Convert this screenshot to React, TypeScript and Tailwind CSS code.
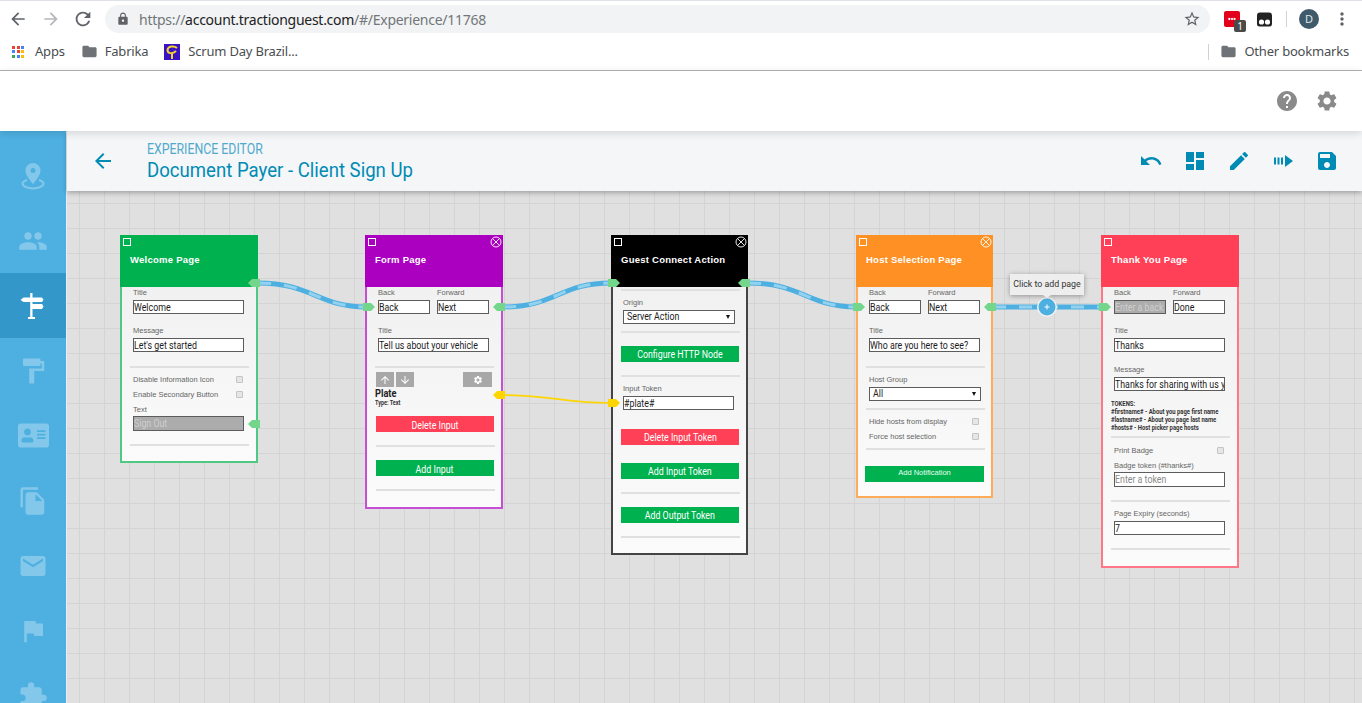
import React from "react";
import {
  MdArrowBack,
  MdArrowForward,
  MdRefresh,
  MdLock,
  MdStarBorder,
  MdFolder,
  MdMoreVert,
  MdHelp,
  MdSettings,
  MdUndo,
  MdDashboard,
  MdEdit,
  MdSave,
  MdPeople,
  MdFormatPaint,
  MdFileCopy,
  MdEmail,
  MdFlag,
  MdExtension,
  MdArrowUpward,
  MdArrowDownward,
} from "react-icons/md";
import { FaAddressCard } from "react-icons/fa";

const Narrow = ({ children, className = "" }: { children: React.ReactNode; className?: string }) => (
  <span className={`inline-block whitespace-nowrap scale-x-[0.84] ${className}`}>{children}</span>
);

const Label = ({ children, className = "" }: { children: React.ReactNode; className?: string }) => (
  <div className={`h-[10px] text-[7.5px] leading-[12px] text-[#666] font-['Liberation_Sans',sans-serif] whitespace-nowrap ${className}`}>
    {children}
  </div>
);

const Input = ({
  value,
  className = "",
  muted,
  disabled,
}: {
  value: string;
  className?: string;
  muted?: boolean;
  disabled?: boolean;
}) => (
  <div
    className={`h-[14px] border border-[#5c5c5c] overflow-hidden flex items-center pt-px text-[10.5px] font-['Roboto',sans-serif] ${
      disabled ? "bg-[#acacac] text-[#cfcfcf]" : "bg-white text-[#1c1c1c]"
    } ${muted ? "text-[#8a8a8a]" : ""} ${className}`}
  >
    <Narrow className="origin-left">{value}</Narrow>
  </div>
);

const SelectBox = ({ value, className = "" }: { value: string; className?: string }) => (
  <div className={`h-[14px] border border-[#5c5c5c] bg-white flex items-center justify-between pl-[3px] pr-[4px] text-[10.5px] text-[#1c1c1c] font-['Roboto',sans-serif] ${className}`}>
    <Narrow className="origin-left">{value}</Narrow>
    <span className="w-0 h-0 border-x-[2.5px] border-x-transparent border-t-[4px] border-t-[#111]" />
  </div>
);

const Hr = ({ className = "" }: { className?: string }) => (
  <div className={`h-[2px] w-[119px] ml-[8px] bg-[#e0e0e0] ${className}`} />
);

const Btn = ({ label, color, className = "" }: { label: string; color: string; className?: string }) => (
  <div className={`h-[16px] w-[118px] ml-[8px] flex items-center justify-center text-white text-[10.5px] font-['Roboto',sans-serif] ${color} ${className}`}>
    <Narrow>{label}</Narrow>
  </div>
);

const CheckRow = ({ label, className = "" }: { label: string; className?: string }) => (
  <div className={`h-[10px] ml-[11px] w-[111px] flex items-center justify-between ${className}`}>
    <Label>{label}</Label>
    <span className="w-[7px] h-[7px] mr-px rounded-[1px] bg-[#e6e6e6] border border-[#c4c4c4]" />
  </div>
);

const BackForward = ({ back, forward, backDisabled }: { back: string; forward: string; backDisabled?: boolean }) => (
  <div className="flex ml-[11px] gap-[7px]">
    <div className="w-[52px]">
      <Label>Back</Label>
      <Input value={back} disabled={backDisabled} className="mt-[3px]" />
    </div>
    <div className="w-[52px]">
      <Label>Forward</Label>
      <Input value={forward} className="mt-[3px]" />
    </div>
  </div>
);

const CloseIcon = () => (
  <svg width="12" height="12" viewBox="0 0 12 12" className="absolute right-[1px] top-[1px]" fill="none" stroke="#fff" strokeWidth="0.9">
    <circle cx="6" cy="6" r="5" />
    <path d="M2.6 2.6 L9.4 9.4 M9.4 2.6 L2.6 9.4" />
  </svg>
);

const Card = ({
  title,
  pos,
  head,
  edge,
  closable,
  children,
}: {
  title: string;
  pos: string;
  head: string;
  edge: string;
  closable?: boolean;
  children: React.ReactNode;
}) => (
  <div className={`absolute flex flex-col ${pos}`}>
    <div className={`relative h-[52px] shrink-0 ${head}`}>
      <span className="absolute left-[3px] top-[3px] w-[8px] h-[8px] border border-white" />
      {closable && <CloseIcon />}
      <div className="absolute left-[10px] top-[19px] text-[9.5px] leading-[12px] font-bold text-white font-['Liberation_Sans',sans-serif] whitespace-nowrap tracking-[0.25px]">
        {title}
      </div>
    </div>
    <div className={`flex-1 border-x-2 border-b-2 bg-gradient-to-b from-[#f1f1f1] to-[#fbfbfb] ${edge}`}>{children}</div>
  </div>
);

const PinIcon = () => (
  <svg width="24" height="28" viewBox="0 0 24 28" fill="currentColor" className="-ml-px">
    <path
      fillRule="evenodd"
      d="M12 1a7.5 7.5 0 0 1 7.5 7.5C19.5 14 12 22 12 22S4.5 14 4.5 8.5A7.5 7.5 0 0 1 12 1zm0 5a2.5 2.5 0 1 0 0 5 2.5 2.5 0 0 0 0-5z"
    />
    <path
      d="M6 18C3 19 1.5 20 1.5 21.5 1.5 24 6 26.5 12 26.5S22.5 24 22.5 21.5C22.5 20 21 19 18 18"
      fill="none"
      stroke="currentColor"
      strokeWidth="2"
    />
  </svg>
);

const SignIcon = () => (
  <svg width="24" height="26" viewBox="0 0 24 26" fill="currentColor" className="-ml-[3px]">
    <path d="M10.2 0h2.3v24.5h-2.3z" />
    <path d="M0.5 7 3.5 4.5H22l1.5 2.3L22 9H3.5z" />
    <path d="M11 11h11l1.5 2.5L22 16H11z" />
    <path d="M8 24h7v2H8z" />
  </svg>
);

const navIcons = [PinIcon, MdPeople, SignIcon, MdFormatPaint, FaAddressCard, MdFileCopy, MdEmail, MdFlag, MdExtension];

const connectors: [number, number, "l" | "r", string][] = [
  [254, 283, "l", "#74d68a"],
  [254, 424, "l", "#74d68a"],
  [369, 307, "r", "#74d68a"],
  [499, 307, "l", "#74d68a"],
  [614, 283, "r", "#74d68a"],
  [744, 283, "l", "#74d68a"],
  [859, 307, "r", "#74d68a"],
  [990, 307, "l", "#74d68a"],
  [1105, 307, "r", "#74d68a"],
  [499, 395, "l", "#ffd500"],
  [614, 403, "r", "#ffd500"],
];

const curves = [
  "M258 283 C 312 283, 318 307, 366 307",
  "M503 307 C 556 307, 560 283, 611 283",
  "M748 283 C 802 283, 808 307, 856 307",
  "M993 307 L 1101 307",
];

const Edges = () => (
  <svg width="1295" height="512" viewBox="67 191 1295 512" className="absolute inset-0 z-10 pointer-events-none" fill="none">
    {curves.map((d) => (
      <g key={d}>
        <path d={d} stroke="#4eb0e1" strokeWidth="5" />
        <path d={d} stroke="#93d2ef" strokeWidth="3" strokeDasharray="13 13" />
      </g>
    ))}
    <path d="M499 395 C 550 395, 565 403, 611 403" stroke="#ffd500" strokeWidth="1.6" />
    {connectors.map(([x, y, dir, color]) => (
      <polygon
        key={`${x}-${y}`}
        fill={color}
        points={
          dir === "l"
            ? `${x - 6},${y} ${x - 2},${y - 4} ${x + 6},${y - 4} ${x + 6},${y + 4} ${x - 2},${y + 4}`
            : `${x - 6},${y - 4} ${x + 2},${y - 4} ${x + 6},${y} ${x + 2},${y + 4} ${x - 6},${y + 4}`
        }
      />
    ))}
    <circle cx="1047" cy="307" r="10" fill="#f2f2f2" />
    <circle cx="1047" cy="307" r="8.5" fill="#4eb0e1" />
    <path d="M1044.5 307 H1049.5 M1047 304.5 V309.5" stroke="#fff" strokeWidth="1" />
  </svg>
);

const BrowserBar = () => (
  <div className="h-[71px] shrink-0 bg-white border-b border-[#b3b3b3] border-t border-t-[#dfe1e8] font-['Noto_Sans',sans-serif] text-[#5f6368]">
    <div className="h-[33px] flex items-center pt-[3px]">
      <MdArrowBack size={20} className="ml-[8px] text-[#5f6368]" />
      <MdArrowForward size={20} className="ml-[13px] text-[#b4b6b9]" />
      <MdRefresh size={22} className="ml-[11px] text-[#5f6368]" />
      <div className="ml-[11px] w-[1105px] h-[28px] rounded-full bg-[#f1f3f4] flex items-center">
        <MdLock size={14} className="ml-[11px] text-[#5f6368]" />
        <span className="ml-[9px] text-[14px] tracking-[-0.27px] text-[#72767a] whitespace-nowrap">
          https://<span className="text-[#222]">account.tractionguest.com</span>/#/Experience/11768
        </span>
        <MdStarBorder size={18} className="ml-auto mr-[9px] text-[#5f6368]" />
      </div>
      <div className="relative ml-[14px] w-[16px] h-[16px] rounded-[2px] bg-[#e2001a] flex items-center justify-center text-[7px] leading-none font-bold text-white">
        •••
        <span className="absolute left-[10px] top-[9px] w-[12px] h-[12px] rounded-[2px] bg-[#4a4a4a] text-[10px] leading-[12px] text-center font-normal">1</span>
      </div>
      <svg width="15" height="15" viewBox="0 0 15 15" className="ml-[17px]">
        <path d="M3 0.5h9a3 3 0 0 1 3 3V12a2.5 2.5 0 0 1-2.5 2.5h-10A2.5 2.5 0 0 1 0 12V3.5a3 3 0 0 1 3-3z" fill="#222" />
        <circle cx="4.5" cy="10" r="2.6" fill="#fff" />
        <circle cx="10.5" cy="10" r="2.6" fill="#fff" />
      </svg>
      <div className="ml-[14px] w-px h-[16px] bg-[#d0d2d4]" />
      <div className="ml-[12px] w-[20px] h-[20px] rounded-full bg-[#3f5a6b] text-[#dfe6ea] text-[11px] leading-[20px] text-center">D</div>
      <MdMoreVert size={20} className="ml-[13px] text-[#5f6368]" />
    </div>
    <div className="h-[35px] flex items-center text-[13px] text-[#4a4d50] tracking-[-0.2px]">
      <span className="ml-[12px] grid grid-cols-3 gap-[1.5px]">
        {["#ea4335", "#ea4335", "#4285f4", "#4285f4", "#ea4335", "#fbbc05", "#34a853", "#4285f4", "#fbbc05"].map((c, i) => (
          <i key={i} className="block w-[3px] h-[3px]" style={{ background: c }} />
        ))}
      </span>
      <span className="ml-[11px]">Apps</span>
      <MdFolder size={17} className="ml-[16px] text-[#6f7377]" />
      <span className="ml-[7px]">Fabrika</span>
      <svg width="16" height="16" viewBox="0 0 16 16" className="ml-[16px]">
        <rect width="16" height="16" fill="#3a12c4" />
        <path d="M13 4 C 10 1.5, 4 2, 3.5 6 C 3.5 10, 9 10, 12 7 M8 9 V15" stroke="#f2d32a" strokeWidth="2" fill="none" />
      </svg>
      <span className="ml-[8px]">Scrum Day Brazil...</span>
      <div className="ml-auto w-px h-[16px] bg-[#d0d2d4]" />
      <MdFolder size={17} className="ml-[11px] text-[#6f7377]" />
      <span className="ml-[7px] mr-[13px]">Other bookmarks</span>
    </div>
  </div>
);

export default function App() {
  return (
    <div className="w-[1362px] h-[703px] overflow-hidden flex flex-col bg-white">
      <BrowserBar />
      <div className="h-[60px] shrink-0 relative z-30 bg-white shadow-[0_2px_8px_rgba(0,0,0,0.14)] flex items-center justify-end gap-[16px] pr-[23px] text-[#8a8a8a]">
        <MdHelp size={24} />
        <MdSettings size={24} />
      </div>
      <div className="flex-1 flex min-h-0">
        <div className="w-[67px] shrink-0 bg-[#4eb0e1] border-r border-[#e8eef2] pt-[12px] text-white/30 relative z-20">
          {navIcons.map((Icon, i) => (
            <div key={i} className={`h-[65px] flex items-center justify-center ${i === 2 ? "bg-[#3397c9] text-white" : ""}`}>
              <Icon size={i === 4 ? 31 : 30} />
            </div>
          ))}
        </div>
        <div className="flex-1 flex flex-col min-w-0">
          <div className="h-[60px] shrink-0 relative z-20 bg-[#f5f6f8] shadow-[0_2px_5px_rgba(0,0,0,0.28)] flex items-center text-[#008bb5]">
            <MdArrowBack size={24} className="ml-[24px]" />
            <div className="ml-[32px] font-['Roboto',sans-serif]">
              <div className="text-[14.5px] leading-[16px] text-[#4fa9cc] whitespace-nowrap origin-left scale-x-[0.85] mt-[3px]">EXPERIENCE EDITOR</div>
              <div className="text-[21px] leading-[25px] whitespace-nowrap origin-left scale-x-[0.885]">Document Payer - Client Sign Up</div>
            </div>
            <div className="ml-auto mr-[23px] flex items-center gap-[20px]">
              <MdUndo size={24} />
              <MdDashboard size={24} />
              <MdEdit size={24} />
              <svg width="24" height="24" viewBox="0 0 24 24" fill="currentColor">
                <path d="M3 8.5h2v7H3zM6.5 8.5h2v7h-2zM10 8.5h2v7h-2zM14 6l8 6-8 6z" />
              </svg>
              <MdSave size={24} />
            </div>
          </div>
          <div className="flex-1 relative bg-[#e0e0e0] bg-[linear-gradient(to_right,#d4d4d4_1px,transparent_1px),linear-gradient(to_bottom,#d4d4d4_1px,transparent_1px)] bg-[size:25px_25px] bg-[position:12px_12px]">
            <Card title="Welcome Page" pos="left-[53px] top-[44px] w-[138px] h-[228px]" head="bg-[#00b14f]" edge="border-[#4fc884]">
              <Label className="ml-[11px]">Title</Label>
              <Input value="Welcome" className="ml-[11px] w-[111px] mt-[3px]" />
              <Label className="ml-[11px] mt-[11px]">Message</Label>
              <Input value="Let's get started" className="ml-[11px] w-[111px] mt-[3px]" />
              <Hr className="mt-[14px]" />
              <CheckRow label="Disable Information Icon" className="mt-[6px]" />
              <CheckRow label="Enable Secondary Button" className="mt-[5px]" />
              <Label className="ml-[11px] mt-[5px]">Text</Label>
              <Input value="Sign Out" disabled className="ml-[11px] w-[111px] mt-[2px] h-[15px]" />
              <Hr className="mt-[13px]" />
            </Card>

            <Card title="Form Page" pos="left-[298px] top-[44px] w-[138px] h-[274px]" head="bg-[#ac00c1]" edge="border-[#c64fd6]" closable>
              <BackForward back="Back" forward="Next" />
              <Label className="ml-[11px] mt-[11px]">Title</Label>
              <Input value="Tell us about your vehicle" className="ml-[11px] w-[111px] mt-[3px]" />
              <Hr className="mt-[14px]" />
              <div className="ml-[9px] w-[116px] mt-[4px] flex gap-[2px] text-white">
                <span className="w-[18px] h-[15px] bg-[#a8a8a8] flex items-center justify-center"><MdArrowUpward size={12} /></span>
                <span className="w-[18px] h-[15px] bg-[#a8a8a8] flex items-center justify-center"><MdArrowDownward size={12} /></span>
                <span className="ml-auto w-[29px] h-[15px] bg-[#a8a8a8] flex items-center justify-center"><MdSettings size={10} /></span>
              </div>
              <div className="ml-[8px] mt-[2px] h-[10px] text-[11px] leading-[10px] font-bold text-[#222] font-['Roboto',sans-serif]">
                <Narrow className="origin-left">Plate</Narrow>
              </div>
              <div className="ml-[8px] mt-[1px] h-[7px] text-[6.5px] leading-[7px] font-bold text-[#333] font-['Roboto',sans-serif]">
                <Narrow className="origin-left">Type: Text</Narrow>
              </div>
              <Btn label="Delete Input" color="bg-[#ff4057]" className="ml-[9px] mt-[9px] pt-[3px]" />
              <Hr className="ml-[9px] mt-[13px] bg-[#d8d8d8]" />
              <Btn label="Add Input" color="bg-[#00b14f]" className="ml-[9px] mt-[13px] pt-[3px]" />
              <Hr className="ml-[9px] mt-[13px] bg-[#d8d8d8]" />
            </Card>

            <Card title="Guest Connect Action" pos="left-[544px] top-[44px] w-[137px] h-[320px]" head="bg-black" edge="border-[#444]" closable>
              <Hr className="mt-[2px]" />
              <Label className="ml-[10px] mt-[6px]">Origin</Label>
              <SelectBox value="Server Action" className="ml-[10px] w-[112px] mt-[3px]" />
              <Hr className="mt-[7px]" />
              <Btn label="Configure HTTP Node" color="bg-[#00b14f]" className="mt-[13px] pt-[2px]" />
              <Hr className="mt-[13px]" />
              <Label className="ml-[10px] mt-[6px]">Input Token</Label>
              <Input value="#plate#" className="ml-[10px] w-[111px] mt-[3px]" />
              <Btn label="Delete Input Token" color="bg-[#ff4057]" className="mt-[19px] pt-[2px]" />
              <Btn label="Add Input Token" color="bg-[#00b14f]" className="mt-[18px] pt-[2px]" />
              <Hr className="mt-[13px]" />
              <Btn label="Add Output Token" color="bg-[#00b14f]" className="mt-[13px] pt-[2px]" />
              <Hr className="mt-[13px]" />
            </Card>

            <Card title="Host Selection Page" pos="left-[789px] top-[44px] w-[137px] h-[263px]" head="bg-[#ff9124]" edge="border-[#ffab59]" closable>
              <BackForward back="Back" forward="Next" />
              <Label className="ml-[11px] mt-[11px]">Title</Label>
              <Input value="Who are you here to see?" className="ml-[11px] w-[111px] mt-[3px]" />
              <Hr className="mt-[14px]" />
              <Label className="ml-[11px] mt-[6px]">Host Group</Label>
              <SelectBox value="All" className="ml-[11px] w-[112px] mt-[3px]" />
              <Hr className="mt-[7px]" />
              <CheckRow label="Hide hosts from display" className="mt-[6px]" />
              <CheckRow label="Force host selection" className="mt-[5px]" />
              <Hr className="mt-[7px]" />
              <div className="ml-[7px] mt-[16px] w-[119px] h-[16px] bg-[#00b14f] text-[7.5px] leading-[13px] text-center text-[#e8fff0] font-['Liberation_Sans',sans-serif]">
                Add Notification
              </div>
            </Card>

            <Card title="Thank You Page" pos="left-[1034px] top-[44px] w-[138px] h-[333px]" head="bg-[#ff4057]" edge="border-[#ff7787]">
              <BackForward back="Enter a back" forward="Done" backDisabled />
              <Label className="ml-[11px] mt-[11px]">Title</Label>
              <Input value="Thanks" className="ml-[11px] w-[111px] mt-[3px]" />
              <Label className="ml-[11px] mt-[12px]">Message</Label>
              <Input value="Thanks for sharing with us your information" className="ml-[11px] w-[111px] mt-[3px]" />
              <div className="ml-[8px] mt-[9px] text-[7px] leading-[8px] font-bold text-[#333] font-['Roboto',sans-serif]">
                <div><Narrow className="origin-left">TOKENS:</Narrow></div>
                <div><Narrow className="origin-left">#firstname# - About you page first name</Narrow></div>
                <div><Narrow className="origin-left">#lastname# - About you page last name</Narrow></div>
                <div><Narrow className="origin-left">#hosts# - Host picker page hosts</Narrow></div>
              </div>
              <Hr className="mt-[4px]" />
              <CheckRow label="Print Badge" className="mt-[7px]" />
              <Label className="ml-[11px] mt-[5px]">Badge token (#thanks#)</Label>
              <Input value="Enter a token" muted className="ml-[11px] w-[111px] mt-[2px] h-[15px]" />
              <Hr className="mt-[13px]" />
              <Label className="ml-[11px] mt-[6px]">Page Expiry (seconds)</Label>
              <Input value="7" className="ml-[11px] w-[111px] mt-[3px]" />
              <Hr className="mt-[13px]" />
            </Card>

            <Edges />

            <div className="absolute z-20 left-[943px] top-[83px] w-[74px] h-[21px] bg-[#eeeeee] shadow-[0_1px_5px_rgba(0,0,0,0.35)] flex items-center justify-center text-[8.8px] text-[#333] font-['Roboto',sans-serif] whitespace-nowrap">
              Click to add page
              <span className="absolute left-[33px] -bottom-[3px] w-0 h-0 border-x-[4px] border-x-transparent border-t-[3px] border-t-[#eeeeee]" />
            </div>
          </div>
        </div>
      </div>
    </div>
  );
}
